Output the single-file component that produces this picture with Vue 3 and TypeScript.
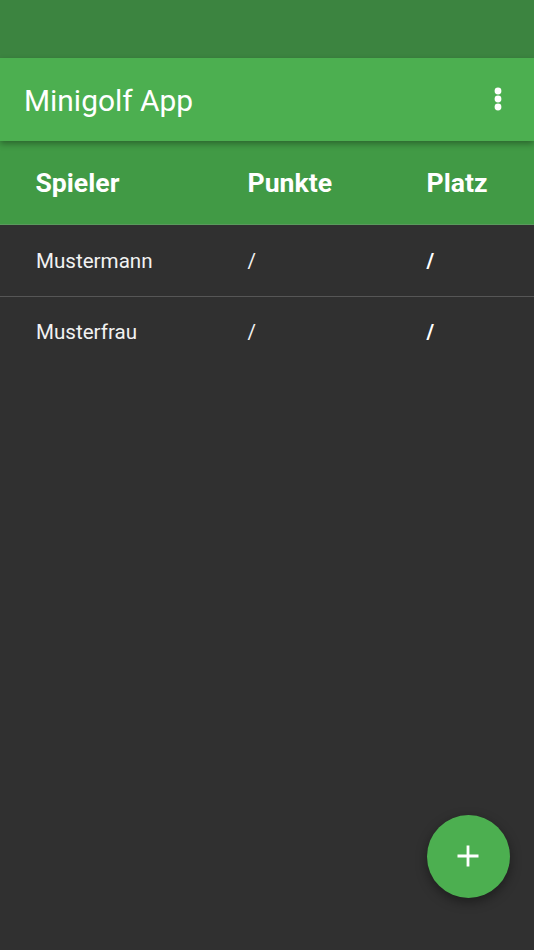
<script setup lang="ts">
interface Player { name: string; points: string; place: string }
const players: Player[] = [
  { name: 'Mustermann', points: '/', place: '/' },
  { name: 'Musterfrau', points: '/', place: '/' },
]
</script>

<template>
  <div class="screen">
    <div class="status"></div>
    <header class="toolbar">
      <span class="title">Minigolf App</span>
      <svg class="more" width="10" height="26" viewBox="0 0 10 26" aria-hidden="true">
        <circle cx="5" cy="5" r="3.4" fill="#fff" />
        <circle cx="5" cy="13" r="3.4" fill="#fff" />
        <circle cx="5" cy="21" r="3.4" fill="#fff" />
      </svg>
    </header>
    <div class="row head">
      <span>Spieler</span>
      <span>Punkte</span>
      <span>Platz</span>
    </div>
    <div v-for="p in players" :key="p.name" class="row player">
      <span>{{ p.name }}</span>
      <span class="slash">{{ p.points }}</span>
      <span class="slash strong">{{ p.place }}</span>
    </div>
    <button class="fab" type="button" aria-label="Hinzufügen">
      <svg width="22" height="22" viewBox="0 0 22 22" aria-hidden="true">
        <path d="M11 0.5v21M0.5 11h21" stroke="#fff" stroke-width="2.8" fill="none" />
      </svg>
    </button>
  </div>
</template>

<style>
html, body { margin: 0; background: #303030; }
</style>

<style scoped>
.screen {
  position: relative;
  width: 534px;
  height: 950px;
  overflow: hidden;
  background: #303030;
  color: #fff;
  font-family: Roboto, "Liberation Sans", sans-serif;
}
.status { height: 58px; background: #3c8440; }
.toolbar {
  position: relative;
  z-index: 1;
  height: 83px;
  padding: 0 31px 0 24px;
  display: flex;
  align-items: center;
  justify-content: space-between;
  background: #4caf50;
  box-shadow: 0 3px 6px rgba(0, 0, 0, 0.32);
}
.title { font-size: 29.9px; font-weight: 400; line-height: 1; padding-top: 3px; }
.more { flex: none; margin-top: -1px; }
.row {
  display: grid;
  grid-template-columns: 212px 179px 1fr;
  padding-left: 36px;
  align-items: center;
}
.head {
  height: 83px;
  background: #419a45;
  border-bottom: 1px solid #5a9a5d;
  font-size: 26.6px;
  font-weight: 700;
}
.head span { margin-left: -0.5px; }
.player {
  height: 71px;
  font-size: 20.6px;
  color: #f2f2f2;
  border-bottom: 1px solid #565656;
}
.player:last-of-type { height: 69px; border-bottom: none; }
.slash { margin-left: -0.5px; }
.strong { font-weight: 700; color: #fff; }
.fab {
  position: absolute;
  left: 427px;
  top: 814.5px;
  width: 83px;
  height: 83px;
  padding: 0;
  border: none;
  border-radius: 50%;
  background: #4caf50;
  display: flex;
  align-items: center;
  justify-content: center;
  box-shadow: 0 4px 12px rgba(0, 0, 0, 0.4);
}
.fab svg { margin: 0 1px 0 0; }
</style>
